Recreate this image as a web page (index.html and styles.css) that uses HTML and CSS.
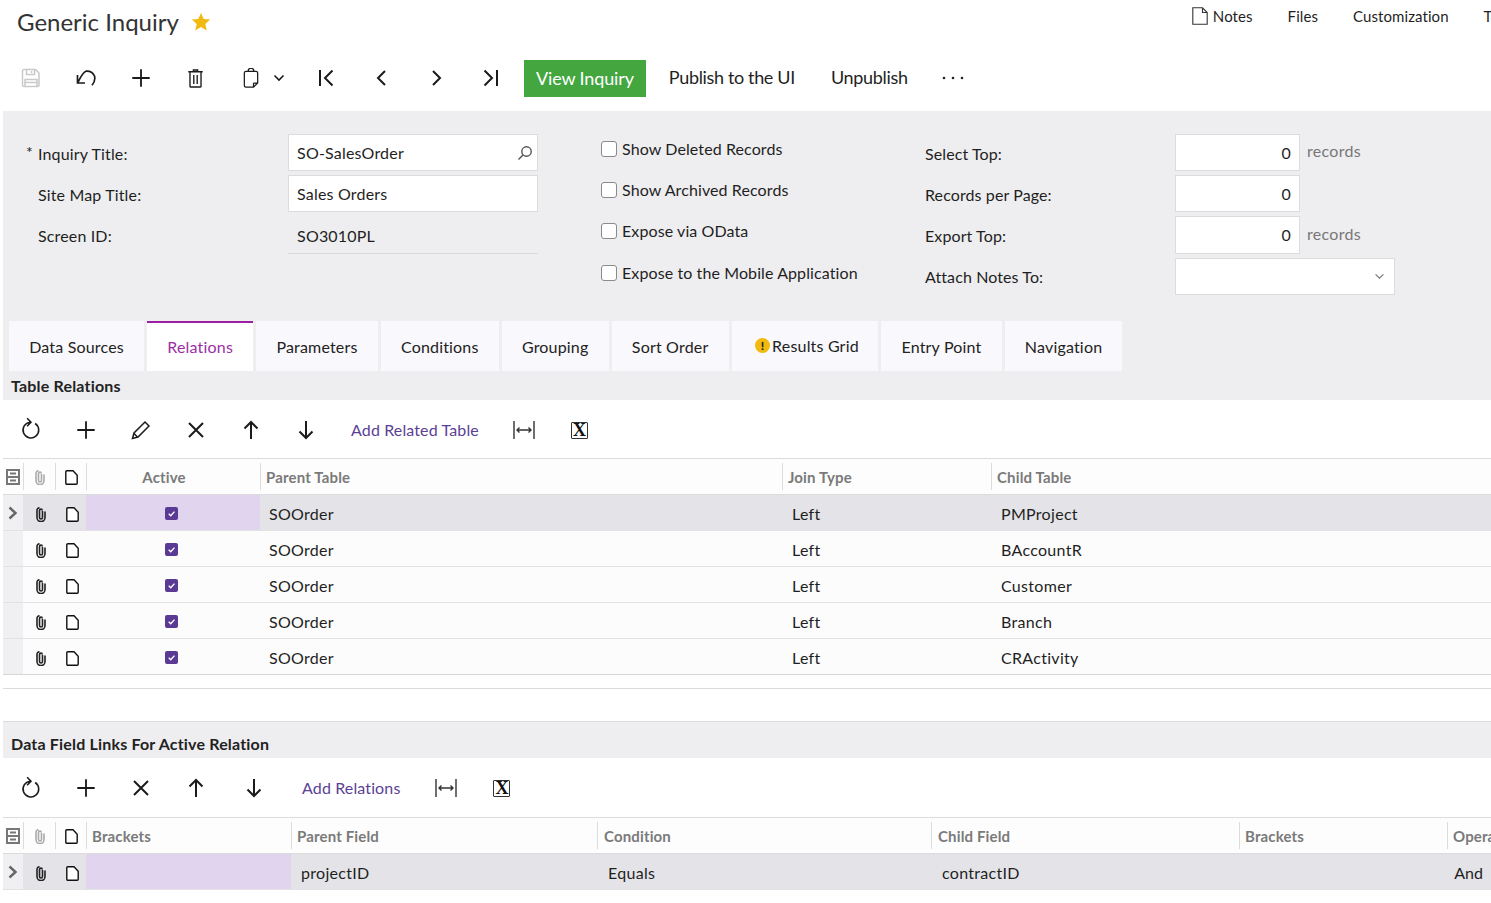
FILE: index.html
```html
<!DOCTYPE html>
<html lang="en">
<head>
<meta charset="utf-8">
<title>Generic Inquiry</title>
<link rel="stylesheet" href="styles.css">
</head>
<body>
<svg class="sprite" xmlns="http://www.w3.org/2000/svg">
  <symbol id="i-save" viewBox="0 0 20 20"><path d="M3 1.500h11.500l3.500 3.500v12a1.500 1.500 0 0 1-1.500 1.500h-13.500a1.500 1.500 0 0 1-1.500-1.500v-14a1.500 1.500 0 0 1 1.500-1.500z M5.500 1.500v5h8v-5 M10.500 3v2 M4 18.500v-7h12v7 M4 14.500h12"/></symbol>
  <symbol id="i-undo" viewBox="0 0 20 16"><path d="M16 15.200Q19.700 11 18.500 6Q16 .8 10 1.200Q7 2 1.800 12.500 M1.500 5L1.500 13L9 13"/></symbol>
  <symbol id="i-plus" viewBox="0 0 24 24"><path d="M12 2.500v19 M2.500 12h19"/></symbol>
  <symbol id="i-trash" viewBox="0 0 20 22"><path d="M7.500 2.500v-1.500h5v1.500 M1.500 3h17 M3.500 3.500v16.500a1 1 0 0 0 1 1h11a1 1 0 0 0 1-1v-16.500 M8 7v10.500 M12 7v10.500"/></symbol>
  <symbol id="i-paste" viewBox="0 0 20 24"><path d="M4 4h12a2 2 0 0 1 2 2v12l-5 5h-9a2 2 0 0 1-2-2v-15a2 2 0 0 1 2-2z M6.500 4c0-5 7-5 7 0 M18 18h-4a1 1 0 0 0-1 1v4"/></symbol>
  <symbol id="i-caret" viewBox="0 0 12 8"><path d="M1.500 1.500l4.500 4.500 4.500-4.500"/></symbol>
  <symbol id="i-first" viewBox="0 0 18 18"><path d="M3 1v16 M15.500 1.500l-7.500 7.500 7.500 7.500"/></symbol>
  <symbol id="i-prev" viewBox="0 0 18 18"><path d="M13 2l-7 7 7 7"/></symbol>
  <symbol id="i-next" viewBox="0 0 18 18"><path d="M6 2l7 7-7 7"/></symbol>
  <symbol id="i-last" viewBox="0 0 18 18"><path d="M15 1v16 M2.500 1.500l7.500 7.500-7.500 7.500"/></symbol>
  <symbol id="i-refresh" viewBox="0 0 20 22"><path d="M13.500 6.200A7.500 7.500 0 1 1 8.800 5 M5.800 1.200L9.500 5L5.800 8.800"/></symbol>
  <symbol id="i-pencil" viewBox="0 0 20 20"><path d="M14 2l4 4-11 11-5.500 1.500 1.500-5.500z M3 13.500l3.500 3.500"/></symbol>
  <symbol id="i-x" viewBox="0 0 20 20"><path d="M3 3l14 14 M17 3l-14 14"/></symbol>
  <symbol id="i-up" viewBox="0 0 20 20"><path d="M10 2v17 M3.500 8.500l6.500-6.500 6.500 6.500"/></symbol>
  <symbol id="i-down" viewBox="0 0 20 20"><path d="M10 1v17 M3.500 11.500l6.500 6.500 6.500-6.500"/></symbol>
  <symbol id="i-fit" viewBox="0 0 24 20"><path d="M2 1v18 M22 1v18"/><path d="M5 10h14 M7.500 7.500l-2.500 2.500 2.500 2.500 M16.500 7.500l2.500 2.500-2.500 2.500"/></symbol>
  <symbol id="i-clip" viewBox="0 0 10 15"><path d="M6.500 4v6.500a1.500 1.500 0 0 1-3 0v-7a1.400 1.400 0 0 1 2.800 0"/><path d="M9 4.500v6a4 4 0 0 1-8 0v-7.500a2.700 2.700 0 0 1 2.500-2.300"/></symbol>
  <symbol id="i-page" viewBox="0 0 13 15"><path d="M.8 1.800a1 1 0 0 1 1-1h6.200l4.200 4.400v8a1 1 0 0 1-1 1h-9.400a1 1 0 0 1-1-1z"/></symbol>
  <symbol id="i-note" viewBox="0 0 16 18"><path d="M.8.800h9.700l4.700 4.700v11.700h-14.400z M10.500.800v4.700h4.700"/></symbol>
  <symbol id="i-cols" viewBox="0 0 14 16"><path d="M1 1h12v14h-12z M1 8h12"/><path d="M4 4.500h6 M4 11.500h6"/></symbol>
  <symbol id="i-search" viewBox="0 0 16 16"><circle cx="9.500" cy="6.500" r="4.700"/><path d="M6 10l-4.500 4.500"/></symbol>
  <symbol id="i-star" viewBox="0 0 20 20"><path d="M10 1l2.700 6 6.500.6-4.900 4.400 1.500 6.500-5.800-3.400-5.800 3.400 1.500-6.500-4.900-4.400 6.500-.6z"/></symbol>
  <symbol id="i-check" viewBox="0 0 14 14"><path d="M4 7.300l2.200 2.200 4-4.500"/></symbol>
  <symbol id="i-chev" viewBox="0 0 10 14"><path d="M1.500 1.500l6 5.500-6 5.500"/></symbol>
  <symbol id="i-dots" viewBox="0 0 22 6"><circle cx="2" cy="3" r="1.300"/><circle cx="11" cy="3" r="1.300"/><circle cx="20" cy="3" r="1.300"/></symbol>
</svg>

<div class="page">
  <header class="titlebar">
    <h1 class="title">Generic Inquiry</h1>
    <svg class="star"><use href="#i-star"/></svg>
    <nav class="toplinks">
      <a class="toplink"><svg class="noteicon"><use href="#i-note"/></svg>Notes</a>
      <a class="toplink">Files</a>
      <a class="toplink">Customization</a>
      <a class="toplink">Tools</a>
    </nav>
  </header>

  <div class="toolbar main">
    <span class="tb"><svg class="ico w20 muted"><use href="#i-save"/></svg></span>
    <span class="tb"><svg class="ico undo"><use href="#i-undo"/></svg></span>
    <span class="tb"><svg class="ico w24 thick"><use href="#i-plus"/></svg></span>
    <span class="tb"><svg class="ico trash"><use href="#i-trash"/></svg></span>
    <span class="tb paste"><svg class="ico w20"><use href="#i-paste"/></svg><svg class="ico caret"><use href="#i-caret"/></svg></span>
    <span class="tb"><svg class="ico w18 thick"><use href="#i-first"/></svg></span>
    <span class="tb"><svg class="ico w18 thick"><use href="#i-prev"/></svg></span>
    <span class="tb"><svg class="ico w18 thick"><use href="#i-next"/></svg></span>
    <span class="tb"><svg class="ico w18 thick"><use href="#i-last"/></svg></span>
    <button class="primary">View Inquiry</button>
    <span class="textbtn publish">Publish to the UI</span>
    <span class="textbtn unpublish">Unpublish</span>
    <svg class="dots"><use href="#i-dots"/></svg>
  </div>

  <section class="formarea">
    <div class="form">
      <label class="flabel"><span class="req">*</span>Inquiry Title:</label>
      <div class="input search">SO-SalesOrder<svg class="ico searchicon"><use href="#i-search"/></svg></div>
      <label class="check"><span class="box"></span>Show Deleted Records</label>
      <label class="flabel2">Select Top:</label>
      <div class="numwrap"><div class="input num">0</div><span class="unit">records</span></div>

      <label class="flabel">Site Map Title:</label>
      <div class="input">Sales Orders</div>
      <label class="check"><span class="box"></span>Show Archived Records</label>
      <label class="flabel2">Records per Page:</label>
      <div class="numwrap"><div class="input num">0</div></div>

      <label class="flabel">Screen ID:</label>
      <div class="input readonly">SO3010PL</div>
      <label class="check"><span class="box"></span>Expose via OData</label>
      <label class="flabel2">Export Top:</label>
      <div class="numwrap"><div class="input num">0</div><span class="unit lowunit">records</span></div>

      <div class="spacer"></div>
      <div class="spacer"></div>
      <label class="check"><span class="box"></span>Expose to the Mobile Application</label>
      <label class="flabel2 lastrow">Attach Notes To:</label>
      <div class="input select"><svg class="ico selcaret"><use href="#i-caret"/></svg></div>
    </div>

    <div class="tabs">
      <span class="tab">Data Sources</span>
      <span class="tab active">Relations</span>
      <span class="tab">Parameters</span>
      <span class="tab">Conditions</span>
      <span class="tab">Grouping</span>
      <span class="tab">Sort Order</span>
      <span class="tab warn"><span class="warnicon">!</span>Results Grid</span>
      <span class="tab">Entry Point</span>
      <span class="tab">Navigation</span>
    </div>
    <h2 class="sectiontitle">Table Relations</h2>
  </section>

  <div class="toolbar sub">
    <span class="tb"><svg class="ico refresh"><use href="#i-refresh"/></svg></span>
    <span class="tb"><svg class="ico w24 thick"><use href="#i-plus"/></svg></span>
    <span class="tb"><svg class="ico w18s"><use href="#i-pencil"/></svg></span>
    <span class="tb"><svg class="ico w18s thick"><use href="#i-x"/></svg></span>
    <span class="tb"><svg class="ico w18s thick"><use href="#i-up"/></svg></span>
    <span class="tb"><svg class="ico w18s thick"><use href="#i-down"/></svg></span>
    <span class="tblink first">Add Related Table</span>
    <span class="tb fitbtn"><svg class="ico fit"><use href="#i-fit"/></svg></span>
    <span class="tb"><span class="excel">X</span></span>
  </div>

  <div class="grid g1">
    <div class="row head">
      <span class="sel"><svg class="ico cols"><use href="#i-cols"/></svg></span>
      <span class="hc iconcell"><svg class="ico clip faint"><use href="#i-clip"/></svg></span>
      <span class="hc iconcell"><svg class="ico pg"><use href="#i-page"/></svg></span>
      <span class="hc center">Active</span>
      <span class="hc">Parent Table</span>
      <span class="hc">Join Type</span>
      <span class="hc">Child Table</span>
    </div>
    <div class="row current">
      <span class="sel"><svg class="ico rowarrow"><use href="#i-chev"/></svg></span>
      <span class="ic"><svg class="ico clip"><use href="#i-clip"/></svg></span>
      <span class="ic"><svg class="ico pg"><use href="#i-page"/></svg></span>
      <span class="c active-cell"><span class="cb"><svg class="cbmark"><use href="#i-check"/></svg></span></span>
      <span class="c">SOOrder</span><span class="c cn">Left</span><span class="c cn">PMProject</span>
    </div>
    <div class="row">
      <span class="sel"></span>
      <span class="ic"><svg class="ico clip"><use href="#i-clip"/></svg></span>
      <span class="ic"><svg class="ico pg"><use href="#i-page"/></svg></span>
      <span class="c centerc"><span class="cb"><svg class="cbmark"><use href="#i-check"/></svg></span></span>
      <span class="c">SOOrder</span><span class="c cn">Left</span><span class="c cn">BAccountR</span>
    </div>
    <div class="row">
      <span class="sel"></span>
      <span class="ic"><svg class="ico clip"><use href="#i-clip"/></svg></span>
      <span class="ic"><svg class="ico pg"><use href="#i-page"/></svg></span>
      <span class="c centerc"><span class="cb"><svg class="cbmark"><use href="#i-check"/></svg></span></span>
      <span class="c">SOOrder</span><span class="c cn">Left</span><span class="c cn">Customer</span>
    </div>
    <div class="row">
      <span class="sel"></span>
      <span class="ic"><svg class="ico clip"><use href="#i-clip"/></svg></span>
      <span class="ic"><svg class="ico pg"><use href="#i-page"/></svg></span>
      <span class="c centerc"><span class="cb"><svg class="cbmark"><use href="#i-check"/></svg></span></span>
      <span class="c">SOOrder</span><span class="c cn">Left</span><span class="c cn">Branch</span>
    </div>
    <div class="row">
      <span class="sel"></span>
      <span class="ic"><svg class="ico clip"><use href="#i-clip"/></svg></span>
      <span class="ic"><svg class="ico pg"><use href="#i-page"/></svg></span>
      <span class="c centerc"><span class="cb"><svg class="cbmark"><use href="#i-check"/></svg></span></span>
      <span class="c">SOOrder</span><span class="c cn">Left</span><span class="c cn">CRActivity</span>
    </div>
  </div>
  <div class="gridfoot"></div>

  <h2 class="sectiontitle second">Data Field Links For Active Relation</h2>

  <div class="toolbar sub lower">
    <span class="tb"><svg class="ico refresh"><use href="#i-refresh"/></svg></span>
    <span class="tb"><svg class="ico w24 thick"><use href="#i-plus"/></svg></span>
    <span class="tb"><svg class="ico w18s thick"><use href="#i-x"/></svg></span>
    <span class="tb"><svg class="ico w18s thick"><use href="#i-up"/></svg></span>
    <span class="tb tbdown"><svg class="ico w18s thick"><use href="#i-down"/></svg></span>
    <span class="tblink lowerlink">Add Relations</span>
    <span class="tb fitbtn2"><svg class="ico fit"><use href="#i-fit"/></svg></span>
    <span class="tb xl2"><span class="excel">X</span></span>
  </div>

  <div class="grid g2">
    <div class="row head">
      <span class="sel"><svg class="ico cols"><use href="#i-cols"/></svg></span>
      <span class="hc iconcell"><svg class="ico clip faint"><use href="#i-clip"/></svg></span>
      <span class="hc iconcell"><svg class="ico pg"><use href="#i-page"/></svg></span>
      <span class="hc">Brackets</span>
      <span class="hc">Parent Field</span>
      <span class="hc hn">Condition</span>
      <span class="hc hn">Child Field</span>
      <span class="hc">Brackets</span>
      <span class="hc">Operator</span>
    </div>
    <div class="row current">
      <span class="sel"><svg class="ico rowarrow"><use href="#i-chev"/></svg></span>
      <span class="ic"><svg class="ico clip"><use href="#i-clip"/></svg></span>
      <span class="ic"><svg class="ico pg"><use href="#i-page"/></svg></span>
      <span class="c active-cell"></span>
      <span class="c wide">projectID</span>
      <span class="c wide2">Equals</span>
      <span class="c wide2">contractID</span>
      <span class="c"></span>
      <span class="c right">And</span>
    </div>
  </div>
</div>
</body>
</html>
```

FILE: styles.css
```css
* { box-sizing: border-box; }
html, body { margin: 0; height: 100%; overflow: hidden; background: #fff; }
body { font-family: "Lato", "Liberation Sans", sans-serif; font-size: 16px; color: #1f1f1f; }
.sprite { display: none; }
.page { width: 1491px; padding-left: 3px; overflow: hidden; }

/* icons */
.ico { display: block; fill: none; stroke: #1b1b1b; stroke-width: 1.5; overflow: visible; flex-shrink: 0; }
.w20 { width: 20px; height: 20px; }
.w24 { width: 22px; height: 22px; }
.w18 { width: 18px; height: 18px; stroke-width: 2; }
.w18s { width: 20px; height: 20px; }
.undo { width: 20px; height: 16px; stroke-width: 1.7; }
.trash { width: 17px; height: 19px; stroke-width: 1.6; }
.fit { width: 24px; height: 20px; stroke-width: 1.4; stroke: #333; }
.refresh { width: 21px; height: 23px; margin: -2px 0 0 2px; }
.thick { stroke-width: 2; }
.muted { stroke: #c9c9c9; }

/* title bar */
.titlebar { display: flex; height: 60px; align-items: flex-start; padding-left: 14px; }
.title { margin: 6px 0 0; font-size: 24px; font-weight: 400; line-height: 32px; color: #333; white-space: nowrap; flex-shrink: 0; }
.star { width: 20px; height: 20px; margin: 12px 0 0 12px; fill: #f2b90f; flex-shrink: 0; }
.toplinks { display: flex; gap: 35px; margin-left: 981px; flex-shrink: 0; padding-top: 6px; }
.toplink { display: flex; align-items: center; line-height: 20px; font-size: 15px; letter-spacing: .08px; color: #1f1f1f; white-space: nowrap; }
.noteicon { width: 16px; height: 18px; margin-right: 5px; fill: #fff; stroke: #333; stroke-width: 1.1; }

/* toolbars */
.toolbar { display: flex; align-items: center; }
.main { height: 37px; margin-bottom: 14px; align-items: flex-start; }
.tb { width: 55px; height: 36px; display: flex; align-items: center; justify-content: center; flex-shrink: 0; }
.main .tb:first-child { margin-left: 1px; width: 54px; }
.paste { width: 75px; justify-content: flex-start; padding-left: 18px; }
.caret { width: 12px; height: 8px; margin-left: 12px; stroke-width: 1.6; }
.primary { margin-left: 6px; height: 37px; border: 0; padding: 0 12px 2px; background: #43a63f; color: #fff; font: inherit; font-size: 18px; letter-spacing: -.14px; }
.textbtn { font-size: 18px; line-height: 35px; white-space: nowrap; color: #1f1f1f; }
.publish { margin-left: 23px; letter-spacing: -.35px; }
.unpublish { margin-left: 36px; letter-spacing: -.3px; }
.dots { width: 22px; height: 6px; margin: 15px 0 0 34px; fill: #222; }

/* form */
.formarea { background: #eeeef0; }
.form { display: grid; grid-template-columns: 285px 250px 386px 251px 1fr; grid-template-rows: 37px 37px 38px 37px; row-gap: 4px; padding-top: 23px; padding-bottom: 26px; }
.flabel { padding: 10px 0 0 35px; line-height: 20px; position: relative; white-space: nowrap; letter-spacing: .15px; }
.flabel2 { padding: 10px 0 0 1px; line-height: 20px; white-space: nowrap; letter-spacing: .1px; }
.lastrow { padding-top: 9px; }
.req { position: absolute; left: 23px; top: 8px; font-size: 16px; }
.input { background: #fff; border: 1px solid #dcdcdc; height: 100%; padding: 0 8px; line-height: 35px; position: relative; white-space: nowrap; letter-spacing: .2px; }
.readonly { background: transparent; border: 0; border-bottom: 1px solid #d8d8d8; padding: 2px 9px 0; }
.searchicon { position: absolute; right: 4px; top: 10px; width: 16px; height: 16px; stroke: #555; stroke-width: 1.4; }
.check { display: flex; align-items: flex-start; padding: 5px 0 0 63px; line-height: 20px; white-space: nowrap; letter-spacing: .1px; }
.box { width: 16px; height: 16px; margin: 2px 5px 0 0; border: 1px solid #8a8a8a; border-radius: 3px; background: #fff; flex-shrink: 0; }
.numwrap { display: flex; align-items: flex-start; height: 100%; }
.num { width: 125px; text-align: right; padding-right: 8px; }
.unit { margin-left: 7px; padding-top: 7px; line-height: 20px; color: #777; letter-spacing: .28px; }
.lowunit { padding-top: 8px; }
.select { width: 220px; position: relative; }
.selcaret { position: absolute; right: 9px; top: 14px; width: 11px; height: 7px; stroke: #777; stroke-width: 1.3; }
.spacer { height: 100%; }

/* tabs */
.tabs { display: flex; padding-left: 6px; gap: 3px; height: 50px; }
.tab { display: flex; align-items: center; justify-content: center; height: 50px; padding: 0 20.2px; background: #f9f8fc; white-space: nowrap; color: #222; letter-spacing: .18px; }
.active { background: #fff; color: #9b30a6; border-top: 2px solid #9b1fa0; padding-bottom: 2px; }
.warn { padding: 0 19.5px 2px 23.5px; }
.warnicon { width: 15px; height: 15px; border-radius: 50%; background: #f2b90f; color: #222; font-size: 12px; font-weight: 900; line-height: 15px; text-align: center; margin-right: 2px; }
.sectiontitle { margin: 0; padding-left: 8px; font-size: 16px; letter-spacing: .18px; font-weight: 700; line-height: 29px; height: 29px; color: #222; background: #eeeef0; }
.second { margin-top: 32px; height: 37px; line-height: 44px; border-top: 1px solid #dcdcdc; }

/* sub toolbars */
.sub { height: 58px; padding-top: 1px; }
.tblink { color: #5b3f95; white-space: nowrap; letter-spacing: .13px; }
.tblink.first { margin-left: 18px; }
.fitbtn { margin-left: 18px; }
.excel { display: block; width: 17px; height: 17px; margin-top: 1px; border: 1.5px solid #333; border-radius: 1px; text-align: center; font-family: "Liberation Serif", serif; font-weight: 700; font-size: 18px; line-height: 14px; color: #111; }
.lower { height: 59px; }
.tbdown { width: 61px; }
.lowerlink { margin-left: 18px; line-height: 20px; }
.fitbtn2 { margin-left: 18px; }
.xl2 { margin-left: 1px; }

/* grids */
.grid { border-top: 1px solid #dcdcdc; }
.row { display: grid; height: 36px; align-items: stretch; border-bottom: 1px solid #e2e2e4; background: #fcfcfd; letter-spacing: .3px; }
.g1 .row { grid-template-columns: 20px 32px 31px 174px 522px 209px 500px; }
.g2 .row { grid-template-columns: 20px 32px 31px 205px 306px 334px 308px 208px 44px; }
.g1 .row:last-child { border-bottom: 1px solid #d6d6d8; }
.head { background: #fdfdfd; border-bottom-color: #dcdcdc; }
.current { background: #e4e4e8; }
.sel { background: #f0f0f2; display: flex; align-items: center; justify-content: center; }
.head .sel { background: #fdfdfd; padding-top: 1px; }
.hc { margin: 4px 0; height: 27px; border-left: 1px solid #dcdcdc; padding-left: 5px; line-height: 29px; font-size: 15px; font-weight: 700; letter-spacing: .15px; color: #7a7a7a; white-space: nowrap; overflow: hidden; }
.hn { padding-left: 6px; }
.center { text-align: center; padding: 0 19px 0 0; }
.iconcell { display: flex; align-items: center; justify-content: center; padding: 2px 0 0 1px; }
.ic { display: flex; align-items: center; justify-content: center; padding: 4px 0 0 3px; }
.c { padding: 2px 0 0 9px; line-height: 33px; white-space: nowrap; overflow: hidden; }
.cn { padding-left: 10px; }
.wide { padding-left: 10px; }
.wide2 { padding-left: 11px; }
.centerc { display: flex; align-items: center; justify-content: center; padding: 1px 4px 0 0; }
.active-cell { background: #e0d4ee; display: flex; align-items: center; justify-content: center; padding: 1px 4px 0 0; }
.right { text-align: right; padding: 2px 8px 0 0; overflow: visible; letter-spacing: 0; }
.cb { width: 13px; height: 13px; border-radius: 2px; background: #5b3a94; display: block; }
.cbmark { display: block; width: 13px; height: 13px; fill: none; stroke: #fff; stroke-width: 1.5; }
.cols { width: 14px; height: 16px; stroke: #777; stroke-width: 2; }
.clip { width: 10px; height: 15px; stroke: #222; stroke-width: 1.6; }
.faint { stroke: #aaa; }
.pg { width: 13px; height: 15px; stroke: #111; stroke-width: 1.4; fill: #fff; }
.rowarrow { width: 10px; height: 14px; stroke: #666; stroke-width: 2.4; }
.gridfoot { height: 14px; border-bottom: 1px solid #dcdcdc; }
```
